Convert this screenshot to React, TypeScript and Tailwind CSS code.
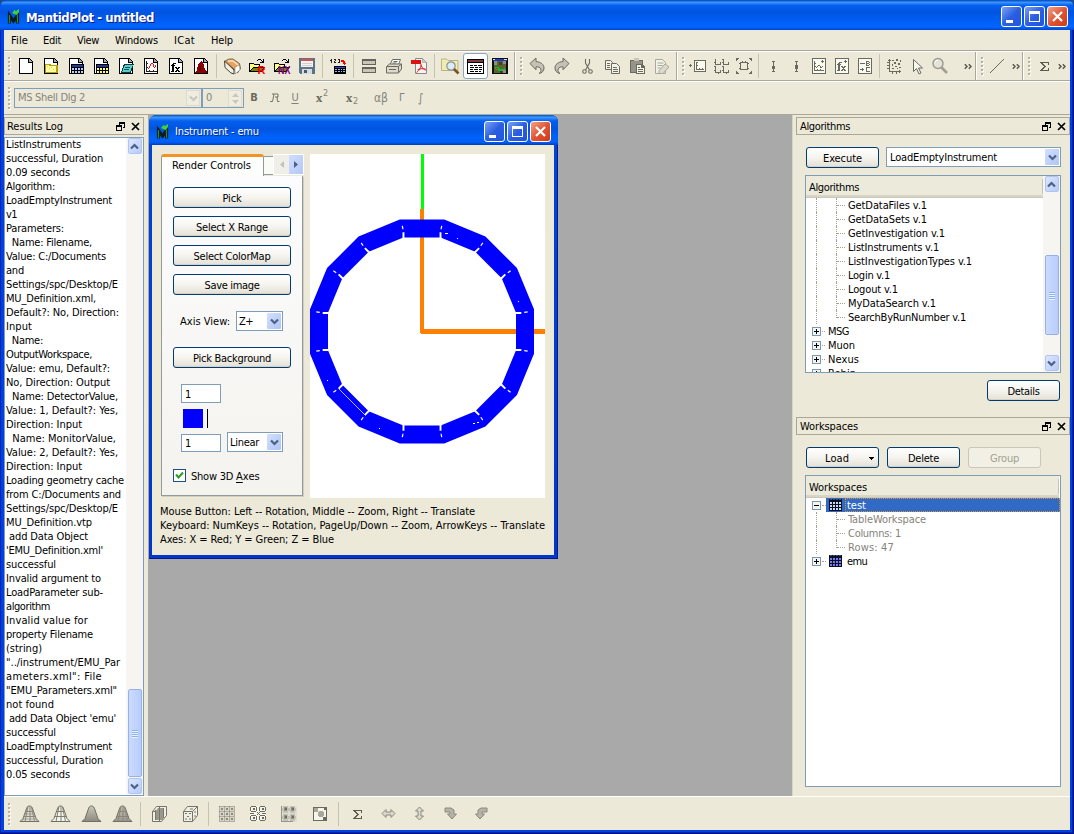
import React, { useLayoutEffect, useRef, useState } from "react";

/* Text whose tracking is computed so that it spans a given width. */
function Fit({ t, w, c = "" }: { t: string; w: number; c?: string }) {
  const ref = useRef<HTMLSpanElement>(null);
  const [ls, setLs] = useState(0);
  useLayoutEffect(() => {
    const el = ref.current;
    if (!el) return;
    el.style.letterSpacing = "0px";
    const natural = el.getBoundingClientRect().width;
    setLs((w - natural) / t.length);
    el.style.letterSpacing = `${(w - natural) / t.length}px`;
  }, [t, w]);
  return (
    <span ref={ref} className={`inline-block whitespace-pre ${c}`} style={{ letterSpacing: `${ls}px` }}>
      {t}
    </span>
  );
}

const G = "#6b6a5e";

function Ico({ children }: { children: React.ReactNode }) {
  return (
    <svg width="21" height="20" viewBox="0 0 21 20" shapeRendering="crispEdges" className="shrink-0">
      {children}
    </svg>
  );
}
const Cell = ({ children, c = "w-[25px]" }: { children?: React.ReactNode; c?: string }) => (
  <div className={`flex h-full shrink-0 items-center justify-center ${c}`}>{children}</div>
);
const Sep = () => (
  <div className="flex h-full w-[6px] shrink-0 items-center pl-[2px]">
    <div className="h-[24px] w-px bg-[#c5c2b2]" />
  </div>
);
const Grip = ({ n = 5 }: { n?: number }) => (
  <div className="flex h-full w-[10px] shrink-0 flex-col items-center justify-center gap-[2px]">
    {Array.from({ length: n }, (_, i) => (
      <div key={i} className="h-[2px] w-[2px] bg-[#b5b2a2] shadow-[1px_1px_0_#fff]" />
    ))}
  </div>
);
const Break = () => <div className="h-[28px] w-[2px] shrink-0 border-r border-white bg-[#aca899]" />;
const Chev = () => (
  <svg width="9" height="7" viewBox="0 0 9 7" fill="none" stroke="#55544a" strokeWidth="1.4">
    <path d="M.8 1.300 3 3.500.8 5.700M4.800 1.300 7 3.500 4.800 5.700" />
  </svg>
);

const Page = () => (
  <>
    <path d="M3 2h10l4 4v12H3z" fill="#000" />
    <path d="M4 3h8v4h4v10H4z" fill="#fff" />
    <path d="M13 3v3h3z" fill="#aaa" />
  </>
);
const Grid = ({ x, y, f }: { x: number; y: number; f: string }) => (
  <>
    <path d={`M${x} ${y}h13v10h-13z`} fill="#000" />
    <path d={`M${x + 1} ${y + 1}h11v2h-11z`} fill="#223a9c" />
    {[0, 1, 2, 3].map((i) =>
      [0, 1].map((j) => <rect key={`${i}${j}`} x={x + 1 + i * 3} y={y + 4 + j * 3} width="2" height="2" fill={f} />)
    )}
  </>
);
/* The letters f and x, nine pixels square, as rows of pixels. */
const FX = ["..XXX....", ".XX......", "XXXX.....", ".XX......", ".XX.XX.XX", ".XX..XXX.", ".XX...X..", ".XX..XXX.", "XXX.XX.XX"];
const Fx = ({ x, y, f }: { x: number; y: number; f: string }) => (
  <g fill={f}>
    {FX.flatMap((row, j) =>
      row.split("").map((p, i) => (p === "X" ? <rect key={`${i}-${j}`} x={x + i} y={y + j} width="1" height="1" /> : null))
    )}
  </g>
);

const FileIcons = () => (
  <>
    <Cell><Ico><Page /></Ico></Cell>
    <Cell>
      <Ico>
        <Page />
        <path d="M4 8h5l1 1h7v8H4z" fill="#b9a000" />
        <path d="M5 9h3v1h7v6H5z" fill="#ffffa0" />
        <path d="M6 10h1v1H6zM8 12h1v1H8zM10 11h1v1h-1zM12 13h1v1h-1z" fill="#e8d840" />
      </Ico>
    </Cell>
    <Cell><Ico><Page /><Grid x={5} y={8} f="#b8d0ff" /></Ico></Cell>
    <Cell><Ico><Page /><Grid x={5} y={8} f="#ffff70" /></Ico></Cell>
    <Cell>
      <Ico>
        <Page />
        <path d="M8 8h10l-3 9H5z" fill="#063c3c" />
        <path d="M9 9h8l-3 7H6z" fill="#5ccccc" />
        <path d="M9 11h5v1H9zM8 13h5v1H8z" fill="#075e5e" />
      </Ico>
    </Cell>
    <Cell>
      <Ico>
        <Page />
        <path d="M5 5h1v10h10v1H5zM6 7h1v1H6zM6 11h1v1H6zM8 14h1v1H8zM12 14h1v1h-1z" fill="#222" />
        <path d="M7 12h1v1H7zM8 10h1v2H8zM9 8h1v2H9zM10 7h2v1h-2zM12 8h1v3h-1zM13 11h1v1h-1zM14 9h1v2h-1z" fill="#e11" />
      </Ico>
    </Cell>
    <Cell><Ico><Page /><Fx x={5} y={7} f="#000" /></Ico></Cell>
    <Cell>
      <Ico>
        <Page />
        <path d="M4 17v-1l2-2 1-5 1-2h1l1-2 2 2 1 2 1 5 2 2v1z" fill="#8e0000" />
        <path d="M8 10h2v5H8z" fill="#5b0000" />
      </Ico>
    </Cell>
  </>
);

const Folder = ({ l, f }: { l: string; f: string }) => (
  <Ico>
    <path d="M2 7h4l1 1h6v3h5l-3 5H2z" fill="#000" />
    <path d="M3 8h3l1 1h5v2H6l-3 4z" fill="#ffff80" />
    <path d="M6 12h10l-2 3H4z" fill="#808000" />
    <path d="M10 4h1v1h-1zM11 3h3v1h-3zM14 4h1v1h-1zM16 3h1v4h-4V6h2V5h1z" fill="#000" />
    <text
      x={l === "R" ? 10.500 : 6}
      y="18"
      fontSize="11"
      fontWeight="700"
      fontFamily="Liberation Sans, sans-serif"
      fill={f}
      textLength={l === "R" ? 8 : 12.500}
      lengthAdjust="spacingAndGlyphs"
    >
      {l}
    </text>
  </Ico>
);

const Magnifier = ({ s = "#9b9a90", h = "#a09e92" }: { s?: string; h?: string }) => (
  <svg width="21" height="20" viewBox="0 0 21 20">
    <path d="M11.500 11.500l5.500 5.500" stroke={h} strokeWidth="2.600" />
    <circle cx="8" cy="7.500" r="5" fill="#e4e3d8" stroke={s} strokeWidth="1.400" />
    <path d="M5 7a3 3 0 0 1 3-3" stroke="#fff" fill="none" />
  </svg>
);

const Swirl = ({ flip = false }: { flip?: boolean }) => (
  <svg width="21" height="20" viewBox="0 0 21 20">
    <g transform={flip ? "translate(21 0) scale(-1 1)" : undefined}>
      <path d="M3 7.500l6-5.500v3.500c5 .5 8 3 8 6.500 0 3-2 5-5 5.500 2-1.500 2.500-3 1.700-4.700-.7-1.500-2.400-2-4.700-2v3z" fill="#c4c2b4" stroke={G} strokeWidth="1" />
    </g>
  </svg>
);

const Frame = ({ children }: { children: React.ReactNode }) => (
  <Ico>
    <path d="M3 2h14v16H3zM4 3v14h12V3z" fillRule="evenodd" fill={G} />
    <path d="M4 3h12v14H4z" fill="#fbfaf0" />
    {children}
  </Ico>
);
const Pin = ({ up }: { up?: boolean }) => (
  <Ico>
    <path d={up ? "M9 5h3v1h-1v3h1v4h-1v2h1v1H9v-1h1v-2H9V9h1V6H9z" : "M9 5h3v1h-1v4h1v3h-1v2h1v1H9v-1h1v-2H9v-3h1V6H9z"} fill={G} />
  </Ico>
);
const Sigma = () => (
  <svg width="21" height="20" viewBox="0 0 21 20" shapeRendering="crispEdges">
    <path d="M6 6h9v3h-1V7H9v1h1v1h1v1h1v1h-1v1h-1v1H9v1h5v-2h1v3H6v-1h1v-1h1v-1h1v-1h1v-1h-1V9H8V8H7V7H6z" fill="#5d5c51" />
  </svg>
);

function TopToolbar() {
  return (
    <div className="flex h-[30px] shrink-0 items-center border-t border-b border-t-white border-b-[#aca899]">
      <Grip />
      <FileIcons />
      <Sep />
      <Cell>
        <svg width="21" height="20" viewBox="0 0 21 20">
          <path d="M2.500 5l9.500 9 0 4-3-1-6-5.500z" fill="#f4efe3" stroke="#443" strokeWidth="1" />
          <path d="M3 5l4-2 4 0 6.500 4.500 1 5-3 4.500-3.500-4z" fill="#eda25c" stroke="#554" strokeWidth=".8" />
          <path d="M13 11l4.500-2 .5 5-5 4z" fill="#fff" stroke="#665" strokeWidth=".5" />
          <path d="M6 5l5 0 5 4" stroke="#fbe2c3" strokeWidth="1.500" fill="none" />
        </svg>
      </Cell>
      <Cell><Folder l="R" f="#f00" /></Cell>
      <Cell><Folder l="NX" f="#800080" /></Cell>
      <Cell>
        <Ico>
          <path d="M2 2h16v16H3l-1-1z" fill="#5a7386" />
          <path d="M4 3h12v8H4z" fill="#f3f3f3" />
          <path d="M4 3h12v2H4z" fill="#d9524a" />
          <path d="M5 7h10v1H5zM5 9h10v1H5z" fill="#cfcfcf" />
          <path d="M5 13h10v5H5z" fill="#d6dbe0" />
          <path d="M7 14h3v3H7z" fill="#48586a" />
        </Ico>
      </Cell>
      <Sep />
      <Cell>
        <Ico>
          <path d="M3 3h1v4H3zM2 4h1v1H2zM6 3h2v2H7v1h1v1H6V5h1V4H6zM10 3h2v4h-2V6h1V5h-1V5h1V4h-1z" fill="#222" />
          <path d="M13 4h3v1h1v2h1l-2 2-2-2h1V6h-2z" fill="#f00" />
          <path d="M6 10h12v8H6z" fill="#000" />
          <path d="M7 11h10v1H7z" fill="#3048d0" />
          <path d="M7 13h2v1H7zM10 13h2v1h-2zM13 13h1v1h-1zM15 13h2v1h-2zM7 15h2v1H7zM10 15h2v1h-2zM13 15h1v1h-1zM15 15h2v1h-2z" fill="#9ab8ff" />
        </Ico>
      </Cell>
      <Sep />
      <Cell>
        <Ico>
          <path d="M3 3h14v6H3zM3 11h14v6H3z" fill="#66645a" />
          <path d="M4 5h12v3H4zM4 13h12v3H4z" fill="#c9c6b7" />
        </Ico>
      </Cell>
      <Cell>
        <svg width="21" height="20" viewBox="0 0 21 20" stroke={G}>
          <path d="M6 8.500l2.500-5h8l-2 5" fill="#fff" />
          <path d="M2.500 10.500l3-2.500h12v5l-3 4h-12z" fill="#dddacd" />
          <path d="M3 10.500h11.500v6M14.500 10.500l3-2.500M5 13.500h7M9.500 5.500h4M8.500 7h4" fill="none" strokeWidth="1" />
        </svg>
      </Cell>
      <Cell>
        <svg width="21" height="20" viewBox="0 0 21 20">
          <path d="M6.500 2.500h7l4 4v11h-11z" fill="#f4f4f4" stroke="#888" />
          <path d="M13.500 2.500v4h4z" fill="#ccc" stroke="#999" strokeWidth=".6" />
          <path d="M2 4h10v4H2z" fill="#dc1010" />
          <path d="M12 8c0 3-1 6-4.500 8.500M12 9c1 3 3 5 5 5M8.500 13.800c2-1 5-1.500 8-.8" fill="none" stroke="#e02020" strokeWidth="1" />
        </svg>
      </Cell>
      <Sep />
      <Cell>
        <svg width="21" height="20" viewBox="0 0 21 20">
          <path d="M1.500 4.500V3h5l1.500 1.500h10v10h-16.500z" fill="#f1edb0" stroke="#b8b280" />
          <circle cx="11" cy="10" r="4.200" fill="#dcecf6" stroke="#8894a0" strokeWidth="1.200" />
          <path d="M14 13l4.500 4.500" stroke="#7b5329" strokeWidth="2.600" />
        </svg>
      </Cell>
      <Cell>
        <div className="flex h-[26px] w-[25px] shrink-0 items-center justify-center rounded-[3px] border border-[#8aa4bf] bg-white">
          <Ico>
            <path d="M2 3h17v15H2z" fill="#000" />
            <path d="M3 4h15v2H3z" fill="#7d3b3b" />
            <path d="M3 7h15v10H3z" fill="#fff" />
            <path d="M5 9h3v1H5zM9 9h3v1H9zM13 9h4v1h-4zM5 11h4v1H5zM10 11h3v1h-3zM14 11h3v1h-3zM5 13h3v1H5zM9 13h4v1H9zM14 13h3v1h-3zM5 15h4v1H5zM10 15h3v1h-3zM14 15h2v1h-2z" fill="#000" />
          </Ico>
        </div>
      </Cell>
      <Cell>
        <Ico>
          <path d="M2 2h16v16H2z" fill="#111" />
          <path d="M3 3h14v2H3z" fill="#2538c0" />
          <path d="M3 3h2v1H3zM14 3h3v1h-3z" fill="#dde" />
          <path d="M4 5h12v12H4z" fill="#5d6230" />
          <path d="M4 5h3v4H4zM13 5h3v3h-3zM12 14h4v3h-4z" fill="#8d9180" />
          <path d="M5 11h4v1h1v1h4v-1h1v2h-3v1H8v-1H6v-1H5z" fill="#13b82c" />
          <path d="M9 6h3v3H9zM10 15h3v2h-3z" fill="#3c4418" />
          <path d="M6 12h2v1H6z" fill="#e02010" />
        </Ico>
      </Cell>
      <Cell c="w-px" />
      <Break />
      <Cell c="w-[9px]"><Grip /></Cell>
      <Cell><Swirl /></Cell>
      <Cell c="w-[25px] -ml-px mr-px"><Swirl flip /></Cell>
      <Cell>
        <svg width="21" height="20" viewBox="0 0 21 20" fill="none" stroke={G} strokeWidth="1.100">
          <path d="M8.500 3v4l4 7M12.500 3v4l-4 7" />
          <circle cx="7.500" cy="15.500" r="1.800" />
          <circle cx="13.500" cy="15.500" r="1.800" />
        </svg>
      </Cell>
      <Cell>
        <svg width="21" height="20" viewBox="0 0 21 20" stroke={G} fill="#f4f3e8">
          <path d="M3.500 4.500h5l2 2v7h-7z" />
          <path d="M9.500 7.500h5l3 3v7h-8z" />
          <path d="M5 7.500h3M5 9.500h3M5 11.500h3M11 11.500h4M11 13.500h5M11 15.500h5" />
        </svg>
      </Cell>
      <Cell>
        <Ico>
          <path d="M3 4h13v13H3z" fill={G} />
          <path d="M4 5h11v11H4z" fill="#96948a" />
          <path d="M7 2h5v3H7z" fill="#c9c6b8" />
          <path d="M9 8h6l3 3v7H9z" fill={G} />
          <path d="M10 9h4v3h3v5h-7z" fill="#f4f3e8" />
          <path d="M11 11h2v1h-2zM11 13h5v1h-5zM11 15h5v1h-5z" fill={G} />
        </Ico>
      </Cell>
      <Cell>
        <svg width="21" height="20" viewBox="0 0 21 20" stroke="#aaa89b">
          <path d="M3.500 3.500h7l3 3v11h-10z" fill="#f2f1e6" />
          <path d="M5.500 7h6M5.500 9.500h5M5.500 12h3" />
          <path d="M7 14.500l6-6.500 4 3-6 6.500-4 0z" fill="#dbd9cb" />
        </svg>
      </Cell>
      <Cell c="w-px" />
      <Break />
      <Cell c="w-[9px]"><Grip /></Cell>
      <Cell c="w-[23px]">
        <Ico>
          <path d="M1 9h3v1H1zM2 8h1v3H2z" fill={G} />
          <path d="M6 4h12v12H6z" fill={G} />
          <path d="M7 5h10v10H7z" fill="#fbfaf0" />
          <path d="M8 6h2v1H9v2h1v1H9v3h2v-1h1v1h2v-1h1v1h1v1H8z" fill={G} />
        </Ico>
      </Cell>
      <Cell c="w-[23px]">
        <Ico>
          <path d="M3 3h2v1H4zM4 4h1v4h4V6h1v3H4zM3 6h1v1H3zM11 3h2v1h-2zM12 4h1v4h4V6h1v3h-6zM11 6h1v1h-1zM3 10h2v1H3zM4 11h1v5h4v-2h1v3H8v1H7v-1H4zM3 14h1v1H3zM11 10h2v1h-2zM12 11h1v5h4v-2h1v3h-2v1h-1v-1h-3zM11 14h1v1h-1z" fill={G} />
        </Ico>
      </Cell>
      <Cell c="w-[23px]">
        <Ico>
          <path d="M2 2h3v1H4v1H3v1H2zM15 2h3v3h-1V4h-1V3h-1zM2 15h1v1h1v1h1v1H2zM17 15h1v3h-3v-1h1v-1h1z" fill={G} />
          <path d="M6 6h8v8H6zM7 7v6h6V7z" fillRule="evenodd" fill={G} />
          <path d="M5 7h1v1H5zM5 12h1v1H5zM14 7h1v1h-1zM14 12h1v1h-1zM8 5h1v1H8zM11 5h1v1h-1z" fill={G} />
        </Ico>
      </Cell>
      <Sep />
      <Cell c="w-[23px]"><Pin /></Cell>
      <Cell c="w-[23px]"><Pin up /></Cell>
      <Cell c="w-[23px]">
        <Frame>
          <path d="M5 5h1v9h9v1H5zM6 7h1v1H6zM6 10h1v1H6zM8 13h1v1H8zM11 13h1v1h-1z" fill={G} />
          <path d="M7 11h1v1H7zM8 10h1v1H8zM9 9h1v1H9zM10 9h1v1h-1zM11 10h1v2h-1zM12 11h1v1h-1zM13 10h1v1h-1zM12 5h3v1h-3zM13 4h1v3h-1z" fill={G} />
        </Frame>
      </Cell>
      <Cell c="w-[23px]"><Frame><Fx x={5} y={6} f={G} /><path d="M12 5h3v1h-3zM13 4h1v3h-1z" fill={G} /></Frame></Cell>
      <Cell c="w-[23px]">
        <Frame>
          <path d="M5 7h5v1H5zM5 13h4v1H5zM7 12h1v3H7zM11 5h3v1h-2v1h2v1h-2v1h2v1h-3zM14 6h1v1h-1zM14 8h1v1h-1zM11 11h4v1h-3v3h3v1h-4z" fill={G} />
        </Frame>
      </Cell>
      <Sep />
      <Cell c="w-[23px]">
        <Ico>
          <path d="M5 3h1v12h11v1H5zM4 4h3v1H4zM15 14h1v3h-1zM3 6h2v1H3zM3 9h2v1H3zM3 12h2v1H3zM8 16h1v2H8zM12 16h1v2h-1z" fill={G} />
          <path d="M8 4h2v1H8zM12 3h2v2h-2zM16 4h1v2h-1zM10 6h2v2h-2zM14 7h2v2h-2zM8 8h1v2H8zM11 10h2v1h-2zM8 12h2v1H8zM15 11h2v1h-2zM13 12h1v1h-1z" fill={G} />
        </Ico>
      </Cell>
      <Cell c="w-[23px]">
        <svg width="21" height="20" viewBox="0 0 21 20">
          <path d="M6.500 3.500v12l3-3 2.500 5.500 2-1-2.500-5h4z" fill="#f8f7ee" stroke={G} />
        </svg>
      </Cell>
      <Cell c="w-[23px]"><Magnifier /></Cell>
      <Cell c="w-[23px] pl-[10px]"><Chev /></Cell>
      <Break />
      <Cell c="w-[9px]"><Grip /></Cell>
      <Cell c="w-[22px]">
        <svg width="16" height="16" viewBox="0 0 16 16"><path d="M1 15L15 1" stroke={G} /></svg>
      </Cell>
      <Cell c="w-[14px] pl-[2px]"><Chev /></Cell>
      <Break />
      <Cell c="w-[9px]"><Grip /></Cell>
      <Cell c="w-[23px]"><Sigma /></Cell>
      <Cell c="w-[12px]"><Chev /></Cell>
    </div>
  );
}

const Arrow = ({ d = "down", f = "#4d6185" }: { d?: string; f?: string }) => (
  <svg width="9" height="7" viewBox="0 0 9 7">
    <path d={d === "down" ? "M1 1.500l3.500 3.500L8 1.500" : "M1 5.500l3.500-3.500L8 5.500"} fill="none" stroke={f} strokeWidth="2.200" />
  </svg>
);
const ScrollBtn = ({ d }: { d: string }) => (
  <div className="flex h-[16px] w-[14px] shrink-0 items-center justify-center rounded-[2px] border border-[#b0c4f4] bg-gradient-to-br from-[#dce6ff] to-[#b8cbf8]">
    <Arrow d={d} />
  </div>
);
const Thumb = ({ c }: { c: string }) => (
  <div className={`flex w-[14px] shrink-0 flex-col items-center justify-center gap-px rounded-[2px] border border-[#98b0e8] bg-gradient-to-r from-[#cbdbff] to-[#b9cdfb] ${c}`}>
    {[0, 1, 2, 3].map((i) => (
      <div key={i} className="h-px w-[6px] bg-[#8cb0f8] shadow-[0_1px_0_#eef4ff]" />
    ))}
  </div>
);
const Combo = ({ t, w, c, bc = "h-[16px]" }: { t: string; w: number; c: string; bc?: string }) => (
  <div className={`flex shrink-0 items-center justify-between border border-[#7f9db9] bg-white pr-px ${c}`}>
    <Fit t={t} w={w} c="pt-[1px]" />
    <div className={`flex w-[14px] items-center justify-center rounded-[1px] bg-gradient-to-br from-[#d3e0ff] to-[#afc5f5] ${bc}`}>
      <Arrow />
    </div>
  </div>
);
const Btn = ({ children, c = "" }: { children: React.ReactNode; c?: string }) => (
  <div className={`flex h-[21px] shrink-0 items-center justify-center rounded-[3px] border border-[#003c74] bg-gradient-to-b from-white via-[#f5f4ef] to-[#e3e0d6] pt-[3px] shadow-[inset_0_-1px_0_#d6d0c5] ${c}`}>
    {children}
  </div>
);

function WinBtns() {
  const base = "flex h-[21px] w-[21px] items-center justify-center rounded-[3px] border border-white ";
  const blue = base + "bg-gradient-to-br from-[#7ba0f4] via-[#2c5ee0] to-[#1f55df]";
  return (
    <div className="flex gap-[2px]">
      <div className={blue}>
        <svg width="19" height="19"><path d="M4 13h7v3H4z" fill="#fff" /></svg>
      </div>
      <div className={blue}>
        <svg width="19" height="19" shapeRendering="crispEdges"><path d="M4 4h11v11H4zM5 7v7h9V7z" fillRule="evenodd" fill="#fff" /></svg>
      </div>
      <div className={base + "bg-gradient-to-br from-[#f0a088] via-[#e05535] to-[#cc3a12]"}>
        <svg width="19" height="19"><path d="M5 5l9 9M14 5l-9 9" stroke="#fff" strokeWidth="2.200" /></svg>
      </div>
    </div>
  );
}
const Logo = () => (
  <svg width="16" height="17" viewBox="0 0 16 17">
    <path d="M2.500 15.500V7.500L6.500 13l4-5.500v8" fill="none" stroke="#0a1c20" strokeWidth="3.200" />
    <path d="M2.500 15V7M10.500 15V7" fill="none" stroke="#2c8a34" strokeWidth="1.200" />
    <path d="M5 5l2.500-3L9 3l3-2v3l-2 3-3-1z" fill="#3fd03a" />
  </svg>
);

const Dock = ({ t, w, c }: { t: string; w: number; c: string }) => (
  <div className={`flex h-[18px] shrink-0 items-center border border-[#aca899] ${c}`}>
    <Fit t={t} w={w} c="pt-[1px]" />
    <div className="ml-auto flex items-center gap-[6px]">
      <svg width="9" height="9" viewBox="0 0 9 9" shapeRendering="crispEdges">
        <path d="M3 0h6v6H7V5h1V2H4v1H3zM0 3h6v6H0zM1 5v3h4V5z" fillRule="evenodd" fill="#000" />
      </svg>
      <svg width="9" height="9" viewBox="0 0 9 9"><path d="M1 1l7 7M8 1L1 8" stroke="#000" strokeWidth="1.700" /></svg>
    </div>
  </div>
);

const LOG: [string, number][] = [
  ["ListInstruments", 75], ["successful, Duration", 97], ["0.09 seconds", 64], ["Algorithm:", 49],
  ["LoadEmptyInstrument", 106], ["v1", 11], ["Parameters:", 58], ["  Name: Filename,", 86],
  ["Value: C:/Documents", 100], ["and", 18], ["Settings/spc/Desktop/E", 112], ["MU_Definition.xml,", 90],
  ["Default?: No, Direction:", 113], ["Input", 26], ["  Name:", 37], ["OutputWorkspace,", 86],
  ["Value: emu, Default?:", 104], ["No, Direction: Output", 104], ["  Name: DetectorValue,", 112],
  ["Value: 1, Default?: Yes,", 112], ["Direction: Input", 76], ["  Name: MonitorValue,", 110],
  ["Value: 2, Default?: Yes,", 112], ["Direction: Input", 76], ["Loading geometry cache", 118],
  ["from C:/Documents and", 115], ["Settings/spc/Desktop/E", 112], ["MU_Definition.vtp", 86],
  [" add Data Object", 82], ["'EMU_Definition.xml'", 97], ["successful", 50], ["Invalid argument to", 95],
  ["LoadParameter sub-", 97], ["algorithm", 44], ["Invalid value for", 82], ["property Filename", 87],
  ["(string)", 36], ["\"../instrument/EMU_Par", 114], ["ameters.xml\": File", 96], ["\"EMU_Parameters.xml\"", 111],
  ["not found", 48], [" add Data Object 'emu'", 110], ["successful", 50], ["LoadEmptyInstrument", 106],
  ["successful, Duration", 97], ["0.05 seconds", 64],
];

function ResultsLog() {
  return (
    <div className="flex w-[144px] shrink-0 flex-col pt-[2px]">
      <Dock t="Results Log" w={56} c="w-[140px] pl-[2px] pr-[3px]" />
      <div className="mt-[2px] flex h-[659px] w-[140px] border border-[#7f9db9] bg-white">
        <div className="h-full w-[121px] shrink-0 overflow-hidden pl-px">
          {LOG.map(([t, w], i) => (
            <div key={i} className="h-[14px] leading-[14px]"><Fit t={t} w={w} /></div>
          ))}
        </div>
        <div className="flex h-full w-[17px] flex-col items-center bg-[#f6f5f1]">
          <ScrollBtn d="up" />
          <div className="h-[535px] shrink-0" />
          <Thumb c="h-[88px]" />
          <div className="mt-auto pb-px"><ScrollBtn d="down" /></div>
        </div>
      </div>
    </div>
  );
}

const poly = (a: number) =>
  Array.from({ length: 16 }, (_, i) => {
    const t = ((i + 0.5) * Math.PI) / 8;
    const r = a / Math.cos(Math.PI / 16);
    return `${(112 + r * Math.cos(t)).toFixed(2)} ${(177.5 + r * Math.sin(t)).toFixed(2)}`;
  }).join("L");

function Viewport() {
  return (
    <svg width="235" height="344" viewBox="0 0 235 344" className="block shrink-0 bg-white">
      <g shapeRendering="crispEdges">
        <path d="M111 0h3v55h-3z" fill="#00ff00" />
        <path d="M110 55h4v120h121v5H111l-1-1z" fill="#ff8000" />
      </g>
      <path d={`M${poly(112)}ZM${poly(94)}Z`} fillRule="evenodd" fill="#0000ff" />
      <g stroke="#fff">
        {Array.from({ length: 16 }, (_, i) => {
          const t = ((i + 0.5) * Math.PI) / 8;
          const n = Math.round(t / (Math.PI / 4)) * (Math.PI / 4);
          /* each seam leans towards the nearest flat bank */
          const u = t + (n > t ? 0.012 : -0.012);
          return (
            <g key={i}>
              <path d={`M${112 + 95 * Math.cos(t)} ${177.5 + 95 * Math.sin(t)}L${112 + 101 * Math.cos(u)} ${177.5 + 101 * Math.sin(u)}`} strokeWidth="1.900" />
              <path d={`M${112 + 104 * Math.cos(u)} ${177.5 + 104 * Math.sin(u)}L${112 + 107.5 * Math.cos(u)} ${177.5 + 107.5 * Math.sin(u)}`} strokeWidth="1.200" />
            </g>
          );
        })}
        <path d="M28.500 234.500l27 27" stroke="#b9b9ff" strokeWidth="1" />
      </g>
      <path d="M147 84h1v1h-1zM208 147h1v1h-1zM17 226h1v1h-1zM69 274h1v1h-1zM135 79h3v1h-3zM163 269h2v1h-2zM167 268h2v1h-2z" fill="#fff" />
    </svg>
  );
}

function InstrumentWindow() {
  return (
    <div className="ml-px flex h-[444px] w-[409px] flex-col overflow-hidden rounded-t-[7px] bg-gradient-to-b from-[#0046d5] to-[#0036cc] shadow-[inset_-1px_-1px_0_#001a90]">
      <div className="flex h-[30px] shrink-0 items-center bg-[linear-gradient(180deg,#0058c8_0%,#3c94ff_8%,#0460ee_20%,#0054e0_45%,#0062fa_75%,#0060f8_90%,#003cc0_100%)] pl-[7px] pr-[7px] pt-[2px] text-white">
        <Logo />
        <Fit t="Instrument - emu" w={84} c="ml-[3px] pt-[2px] [text-shadow:1px_1px_#002a90]" />
        <div className="ml-auto"><WinBtns /></div>
      </div>
      <div className="ml-[3px] flex h-[410px] w-[402px] flex-col bg-[#ece9d8] pl-[9px] pt-[9px]">
        <div className="flex h-[344px]">
          <div className="flex w-[149px] shrink-0 flex-col">
            <div className="flex h-[22px] shrink-0">
              <div className="flex h-[22px] w-[103px] items-center rounded-t-[3px] border-x border-t-[3px] border-x-[#919b9c] border-t-[#f29425] bg-[#fdfdfc] pl-[10px] pb-[1px]">
                <Fit t="Render Controls" w={79} />
              </div>
              <div className="mt-[2px] h-[19px] w-[9px] border-t border-b border-[#919b9c] bg-[#fafaf7]" />
              <div className="flex h-[21px] w-[31px] border border-white">
                <div className="flex w-[15px] items-center justify-center bg-[#efeee8]">
                  <svg width="4" height="7"><path d="M4 0v7L0 3.500z" fill="#c4c2b8" /></svg>
                </div>
                <div className="flex w-[14px] items-center justify-center bg-gradient-to-br from-[#d0ddff] to-[#b2c8f8]">
                  <svg width="4" height="7"><path d="M0 0v7l4-3.500z" fill="#4d6185" /></svg>
                </div>
              </div>
            </div>
            <div className="flex h-[320px] w-[142px] flex-col border border-t-0 border-[#919b9c] bg-gradient-to-b from-[#fcfcfe] to-[#f4f3ee] pl-[11px] pt-[11px] shadow-[1px_1px_0_#d0cec0]">
              <div className="flex flex-col gap-[8px]">
                <Btn c="w-[118px]"><Fit t="Pick" w={19} /></Btn>
                <Btn c="w-[118px]"><Fit t="Select X Range" w={72} /></Btn>
                <Btn c="w-[118px]"><Fit t="Select ColorMap" w={77} /></Btn>
                <Btn c="w-[118px]"><Fit t="Save image" w={55} /></Btn>
              </div>
              <div className="mt-[16px] flex h-[20px] items-center pl-[7px]">
                <Fit t="Axis View:" w={50} c="pt-[2px]" />
                <Combo t="Z+" w={14} c="ml-[6px] h-[20px] w-[47px] pl-[2px]" />
              </div>
              <Btn c="mt-[16px] w-[118px]"><Fit t="Pick Background" w={78} /></Btn>
              <div className="ml-[8px] mt-[16px] flex h-[19px] w-[40px] shrink-0 items-center border border-[#7f9db9] bg-white pl-[3px] pt-[2px]">1</div>
              <div className="ml-[10px] mt-[6px] flex h-[19px] shrink-0 gap-[4px]">
                <div className="w-[20px] bg-[#0000ff]" />
                <div className="w-px bg-black" />
              </div>
              <div className="ml-[8px] mt-[4px] flex shrink-0 items-end gap-[6px]">
                <div className="flex h-[18px] w-[40px] items-center border border-[#7f9db9] bg-white pl-[3px] pt-[2px]">1</div>
                <Combo t="Linear" w={29} c="h-[20px] w-[56px] pl-[2px]" />
              </div>
              <div className="mt-[17px] flex h-[13px] items-center">
                <div className="flex h-[13px] w-[13px] items-center justify-center border border-[#1c5180] bg-white">
                  <svg width="9" height="9" viewBox="0 0 9 9"><path d="M1 3.500l2.500 3L8 1.500" fill="none" stroke="#21a121" strokeWidth="2" /></svg>
                </div>
                <div className="ml-[5px] flex whitespace-pre pt-[2px]">
                  <Fit t="Show 3D " w={45} />
                  <span className="underline decoration-1 underline-offset-2">A</span>
                  <Fit t="xes" w={17} />
                </div>
              </div>
            </div>
          </div>
          <Viewport />
        </div>
        <div className="mt-[7px] flex flex-col leading-[14px]">
          <div className="-ml-px"><Fit t="Mouse Button: Left -- Rotation, Middle -- Zoom, Right -- Translate" w={315} /></div>
          <div className="-ml-px"><Fit t="Keyboard: NumKeys -- Rotation, PageUp/Down -- Zoom, ArrowKeys -- Translate" w={385} /></div>
          <div className="-ml-px"><Fit t="Axes: X = Red; Y = Green; Z = Blue" w={174} /></div>
        </div>
      </div>
    </div>
  );
}

const HDots = ({ c }: { c: string }) => <div className={`h-0 shrink-0 border-t border-dotted border-[#a5a294] ${c}`} />;
const Expander = ({ plus = true }: { plus?: boolean }) => (
  <svg width="9" height="9" viewBox="0 0 9 9" shapeRendering="crispEdges" className="shrink-0">
    <path d="M0 0h9v9H0z" fill="#7898b5" />
    <path d="M1 1h7v7H1z" fill="#f6f4ee" />
    <path d={plus ? "M2 4h5v1H2zM4 2h1v5H4z" : "M2 4h5v1H2z"} fill="#000" />
  </svg>
);
const Leaf = ({ t, w, c = "", last = false, rail = false }: { t: string; w: number; c?: string; last?: boolean; rail?: boolean }) => (
  <div className={`flex h-[14px] shrink-0 pl-[10px] ${c}`}>
    <div className={`h-full w-[20px] ${rail ? "border-l border-dotted border-[#a5a294]" : ""}`} />
    <div className={`w-0 border-l border-dotted border-[#a5a294] ${last ? "h-[8px]" : "h-full"}`} />
    <div className="flex h-[14px] items-center">
      <HDots c="mr-[3px] w-[8px]" />
      <Fit t={t} w={w} c="pt-[2px]" />
    </div>
  </div>
);

const MiniGrid = ({ f }: { f: string }) => (
  <svg width="13" height="12" viewBox="0 0 13 12" shapeRendering="crispEdges" className="shrink-0">
    <rect width="13" height="12" fill="#0a1020" />
    {[0, 1, 2, 3].map((i) =>
      [0, 1, 2, 3].map((j) => (
        <rect key={`${i}${j}`} x={1 + i * 3} y={j * 3} width="2" height={j ? 2 : 1} fill={j ? f : "#345878"} />
      ))
    )}
  </svg>
);

const TreeHead = ({ t, w, c = "w-full" }: { t: string; w: number; c?: string }) => (
  <div className={`flex h-[22px] shrink-0 items-center border-b border-[#cbc7b8] bg-[#ebeadb] pl-[3px] shadow-[inset_0_-2px_0_#d9d5c6] ${c}`}>
    <Fit t={t} w={w} c="pt-[2px]" />
    <div className="ml-auto h-[15px] w-px bg-[#c7c5b2] shadow-[1px_0_0_#fff]" />
  </div>
);

const ALGS: [string, number][] = [
  ["GetDataFiles v.1", 79], ["GetDataSets v.1", 79], ["GetInvestigation v.1", 97], ["ListInstruments v.1", 91],
  ["ListInvestigationTypes v.1", 124], ["Login v.1", 42], ["Logout v.1", 50], ["MyDataSearch v.1", 88],
  ["SearchByRunNumber v.1", 118],
];
const GROUPS: [string, number][] = [["MSG", 21], ["Muon", 27], ["Nexus", 31], ["Rebin", 28]];

function RightDocks() {
  return (
    <div className="flex w-[278px] shrink-0 flex-col border-l border-[#d8d5c6] pl-[3px] pt-[2px]">
      <Dock t="Algorithms" w={50} c="w-[274px] pl-[3px] pr-[3px]" />
      <div className="mt-[12px] flex shrink-0 gap-[7px] pl-[10px]">
        <Btn c="w-[73px]"><Fit t="Execute" w={39} /></Btn>
        <Combo t="LoadEmptyInstrument" w={107} c="h-[20px] w-[175px] pl-[3px]" />
      </div>
      <div className="ml-[9px] mt-[7px] flex h-[198px] w-[256px] shrink-0 border border-[#7f9db9] bg-white">
        <div className="flex h-full w-[237px] shrink-0 flex-col overflow-hidden">
          <TreeHead t="Algorithms" w={50} />
          {ALGS.map(([t, w], i) => <Leaf key={t} t={t} w={w} rail last={i === ALGS.length - 1} />)}
          {GROUPS.map(([t, w]) => (
            <div key={t} className="flex h-[14px] shrink-0 items-center pl-[6px]">
              <Expander />
              <HDots c="ml-px mr-[3px] w-[3px]" />
              <Fit t={t} w={w} c="pt-[2px]" />
            </div>
          ))}
        </div>
        <div className="flex w-[17px] flex-col items-center bg-[#f6f5f1]">
          <ScrollBtn d="up" />
          <div className="h-[63px] shrink-0" />
          <Thumb c="h-[80px]" />
          <div className="mt-auto pb-px"><ScrollBtn d="down" /></div>
        </div>
      </div>
      <Btn c="ml-[191px] mt-[7px] w-[73px]"><Fit t="Details" w={32} /></Btn>
      <Dock t="Workspaces" w={58} c="mt-[16px] w-[274px] pl-[3px] pr-[3px]" />
      <div className="mt-[12px] flex shrink-0 gap-[8px] pl-[10px]">
        <Btn c="w-[73px] justify-end! pr-[4px]">
          <Fit t="Load" w={24} />
          <svg width="5" height="3" className="mb-[2px] ml-[20px]" shapeRendering="crispEdges"><path d="M0 0h5L2.500 3z" /></svg>
        </Btn>
        <Btn c="w-[73px]"><Fit t="Delete" w={31} /></Btn>
        <div className="flex h-[21px] w-[73px] items-center justify-center rounded-[3px] border border-[#c9c7ba] bg-[#f2f0e4] pt-[3px] text-[#a1a192]">
          <Fit t="Group" w={29} />
        </div>
      </div>
      <div className="ml-[9px] mt-[7px] flex h-[312px] w-[256px] shrink-0 flex-col border border-[#7f9db9] bg-white">
        <TreeHead t="Workspaces" w={58} c="w-[253px]" />
        <div className="flex h-[14px] shrink-0 items-center pl-[6px]">
          <Expander plus={false} />
          <HDots c="ml-px w-[4px]" />
          <div className="flex h-[14px] flex-1 items-center bg-[#316ac5] pl-[3px] text-white">
            <MiniGrid f="#c8dcf8" />
            <div className="ml-[3px] flex h-full flex-1 items-center border border-dotted border-[#d8963a] pl-px">
              <Fit t="test" w={19} c="pt-[2px]" />
            </div>
          </div>
        </div>
        <Leaf t="TableWorkspace" w={78} rail c="text-[#85837a]" />
        <Leaf t="Columns: 1" w={53} rail c="text-[#85837a]" />
        <Leaf t="Rows: 47" w={46} rail last c="text-[#85837a]" />
        <div className="flex h-[14px] shrink-0 items-center pl-[6px]">
          <Expander />
          <HDots c="ml-px w-[4px]" />
          <div className="flex items-center gap-[5px] pl-[3px]">
            <MiniGrid f="#7878f8" />
            <Fit t="emu" w={20} c="pt-[2px]" />
          </div>
        </div>
      </div>
    </div>
  );
}

const Hill = ({ k }: { k: number }) => {
  const s = k === 1 ? "#7d7c70" : "#88867a";
  return (
    <svg width="21" height="20" viewBox="0 0 21 20" fill="none" stroke={s}>
      <defs>
        <linearGradient id={`hill${k}`} x1="0" y1="0" x2="0" y2="1">
          <stop offset="0" stopColor="#c8c6b8" />
          <stop offset="1" stopColor={k === 3 ? "#98968a" : "#8c8a7e"} />
        </linearGradient>
      </defs>
      <path
        d="M1 17.500l3-3 3-8.500c1-3 1.500-4 3.500-4s2.500 1 3.500 4l3 8.500 3 3z"
        fill={k === 0 ? "#dedccf" : k === 1 ? "#f6f5ea" : `url(#hill${k})`}
        stroke="#6f6e62"
      />
      {k !== 2 && <path d="M9 2.500L6 17.500M11 2v15.500M12.500 3l3 14.500M6.500 7.500h8.500M4.500 12.500h12" />}
      {k === 0 && <path d="M8 5l-4.500 12M13.500 5l4.500 12M5.500 10h10M4 15h13" strokeWidth=".6" />}
    </svg>
  );
};

const Cube = ({ f }: { f: boolean }) => (
  <svg width="21" height="20" viewBox="0 0 21 20" stroke="#77756a" fill="#f0efe3">
    <path d="M3.500 7.500l4-5h10v9l-5 6h-9z" />
    {f && <path d="M6 8l3-4h5v12H6z" fill="#9a988b" stroke="none" />}
    {f ? (
      <path d="M6.500 6v10M10.500 3v14M14.500 4v10M3.500 7.500h3" fill="none" />
    ) : (
      <path d="M3.500 7.500h9v10M12.500 7.500l5-5M5 9.500h2M9 9.500h2M7 12.500h2M5 15h2M9 15h2M10 5h3M15 7v2M15 11v2" fill="none" />
    )}
  </svg>
);

const Pattern = ({ k }: { k: number }) => {
  const corners = [[0, 0], [1, 0], [0, 1], [1, 1]];
  return (
    <Ico>
      {k === 0 && (
        <>
          <path d="M2 2h16v16H2z" fill="#d8d6c8" />
          {[0, 1, 2, 3].map((i) => (
            <path key={i} d={`M${2 + i * 5} 2h1v16h-1zM2 ${2 + i * 5}h16v1H2z`} fill="#b0ae9f" />
          ))}
          {[0, 1, 2].map((i) =>
            [0, 1, 2].map((j) => <path key={`${i}${j}`} d={`M${4 + i * 5} ${4 + j * 5}h2v2h-2zM${2 + i * 5} ${2 + j * 5}h1v1h-1z`} fill="#8c8a7d" />)
          )}
        </>
      )}
      {k === 1 && (
        <>
          <path d="M2 2h16v15H2z" fill="#f6f5ea" />
          {corners.map(([i, j]) => (
            <path key={`${i}${j}`} d={`M${3 + i * 9} ${2 + j * 9}h5v1h1v4h-1v1h-5v-1h-1v-4h1zM${3 + i * 9} ${3 + j * 9}v4h5v-4zM${5 + i * 9} ${4 + j * 9}h2v2h-2z`} fillRule="evenodd" fill={G} />
          ))}
          <path d="M9 8h1v1H9zM11 8h1v1h-1zM10 9h1v1h-1zM9 10h1v1H9zM11 10h1v1h-1zM2 9h4v1H2zM14 9h4v1h-4z" fill={G} />
        </>
      )}
      {k === 2 && (
        <>
          <path d="M2 2h16v16H2z" fill="#e0deD0" />
          {corners.map(([i, j]) => (
            <g key={`${i}${j}`}>
              <path d={`M${4 + i * 7} ${2 + j * 8}h5v7h-5zM${3 + i * 7} ${4 + j * 8}h7v3h-7z`} fill="#c4c2b4" />
              <path d={`M${5 + i * 7} ${3 + j * 8}h3v4h-3z`} fill="#96948a" />
              <path d={`M${6 + i * 7} ${4 + j * 8}h2v2h-2z`} fill={G} />
            </g>
          ))}
          <path d="M2 2h1v16H2zM2 17h12v1H2z" fill="#96948a" />
        </>
      )}
    </Ico>
  );
};

function BottomToolbar() {
  const arrow = "#b6b4a6";
  return (
    <div className="flex h-[34px] shrink-0 items-center border-t border-white">
      <Grip n={6} />
      {[0, 1, 2, 3].map((k) => (
        <Cell key={k} c="w-[31px] pr-px"><Hill k={k} /></Cell>
      ))}
      <Sep />
      <Cell c="w-[31px]"><Cube f /></Cell>
      <Cell c="w-[31px]"><Cube f={false} /></Cell>
      <Sep />
      <Cell c="w-[31px]"><Pattern k={0} /></Cell>
      <Cell c="w-[31px]"><Pattern k={1} /></Cell>
      <Cell c="w-[31px]"><Pattern k={2} /></Cell>
      <Cell c="w-[31px]">
        <Ico>
          <path d="M3 3h14v14H3z" fill={G} />
          <path d="M4 4h12v12H4z" fill="#f6f5ea" />
          <path d="M4 4h4v4H4zM9 7h4v1h1v4h-1v1H9v-1H8V8h1z" fill="#a9a799" />
          <path d="M13 13h3v3h-3zM14 4h2v2h-2z" fill={G} />
        </Ico>
      </Cell>
      <Sep />
      <Cell c="w-[31px]"><Sigma /></Cell>
      <Cell c="w-[31px]">
        <svg width="15" height="11" viewBox="0 0 15 11"><path d="M1 5.500l4-4v2.500h5V1.500l4 4-4 4V7H5v2.500z" fill="#dad8ca" stroke="#8a887c" /></svg>
      </Cell>
      <Cell c="w-[31px]">
        <svg width="11" height="15" viewBox="0 0 11 15"><path d="M5.500 1l4 4H7v5h2.500l-4 4-4-4H4V5H1.500z" fill="#dad8ca" stroke="#8a887c" /></svg>
      </Cell>
      <Cell c="w-[31px]">
        <svg width="13" height="13" viewBox="0 0 13 13"><path d="M1 1h6l3 2v4h2.500L8 12 3.500 7H6V5H1z" fill={arrow} stroke="#8a887c" /></svg>
      </Cell>
      <Cell c="w-[31px]">
        <svg width="13" height="13" viewBox="0 0 13 13"><path d="M12 1H6L3 3v4H.500L5 12l4.500-5H7V5h5z" fill={arrow} stroke="#8a887c" /></svg>
      </Cell>
    </div>
  );
}

function FormatBar() {
  return (
    <div className="flex h-[34px] shrink-0 items-center border-t border-b border-t-white border-b-[#aca899] text-[#85837a]">
      <Grip n={6} />
      <div className="flex h-[20px] w-[188px] items-center justify-between border border-[#7f9db9] pl-[3px] pr-px">
        <Fit t="MS Shell Dlg 2" w={67} />
        <div className="flex h-[16px] w-[14px] items-center justify-center border border-[#dedccd] bg-[#efede0]"><Arrow f="#c9c7ba" /></div>
      </div>
      <div className="flex h-[20px] w-[42px] items-center justify-between border border-[#7f9db9] pl-[3px] pr-px">
        <span>0</span>
        <div className="flex h-[17px] w-[14px] flex-col items-center justify-center gap-[3px] border border-[#dedccd] bg-[#efede0]">
          <svg width="7" height="4"><path d="M0 4h7L3.500 0z" fill="#c9c7ba" /></svg>
          <svg width="7" height="4"><path d="M0 0h7L3.500 4z" fill="#c9c7ba" /></svg>
        </div>
      </div>
      <span className="w-[20px] text-center text-[11px] font-bold text-[#6b6a5e]">B</span>
      <svg width="22" height="12" viewBox="0 0 22 12" fill="none" stroke="#77756a">
        <path d="M6 9.500h2.500l1.500-7.500h-2M10 2h4v3h-3M14 5h-1l.5 4.500H15.500" />
      </svg>
      <span className="w-[18px] text-center text-[11px] underline underline-offset-2">U</span>
      <span className="ml-[12px] w-[7px] font-serif text-[12px] font-bold leading-none text-[#6b6a5e]">x</span>
      <span className="-mt-[9px] w-[23px] text-[9px] leading-none">2</span>
      <span className="w-[7px] font-serif text-[12px] font-bold leading-none text-[#6b6a5e]">x</span>
      <span className="mt-[6px] w-[21px] text-[9px] leading-none">2</span>
      <span className="w-[25px] text-[12px]">αβ</span>
      <span className="w-[19px] text-[11px]">Γ</span>
      <span className="text-[12px]">∫</span>
    </div>
  );
}

const MENU: [string, number, string][] = [
  ["File", 17, "w-[32px]"], ["Edit", 18, "w-[34px]"], ["View", 22, "w-[38px]"],
  ["Windows", 43, "w-[59px]"], ["ICat", 21, "w-[37px]"], ["Help", 22, "w-[30px]"],
];

export default function App() {
  return (
    <div className="h-[834px] w-[1074px] overflow-hidden bg-[#1c4e8c] font-['DejaVu_Sans_Condensed','DejaVu_Sans',sans-serif] text-[11px] leading-[14px] text-black [font-stretch:condensed]">
      <div className="flex h-full flex-col overflow-hidden rounded-t-[7px] bg-[#0040e0] shadow-[inset_-1px_-1px_0_#001080,inset_-2px_-2px_0_#0026b4,inset_1px_0_0_#0026b4]">
        <div className="flex h-[30px] shrink-0 items-center bg-[linear-gradient(180deg,#0048b8_0%,#3c94ff_8%,#0460ee_18%,#0054e0_40%,#0060f8_75%,#0066ff_90%,#0044cc_100%)] pl-[7px] pr-[6px] pt-[3px] text-white">
          <Logo />
          <Fit t="MantidPlot - untitled" w={128} c="ml-[3px] pt-[2px] text-[13px] font-bold [text-shadow:1px_1px_#0a1883]" />
          <div className="ml-auto"><WinBtns /></div>
        </div>
        <div className="ml-[4px] flex h-[800px] w-[1066px] flex-col bg-[#ece9d8]">
          <div className="flex h-[21px] shrink-0 items-center border-b border-[#aca899] pl-[6px] pt-[2px]">
            {MENU.map(([t, w, c]) => (
              <div key={t} className={`${c} pl-px`}><Fit t={t} w={w} /></div>
            ))}
          </div>
          <TopToolbar />
          <FormatBar />
          <div className="flex h-[681px] shrink-0">
            <ResultsLog />
            <div className="h-[681px] w-[644px] shrink-0 bg-[#a9a9a9]">
              <InstrumentWindow />
            </div>
            <RightDocks />
          </div>
          <BottomToolbar />
        </div>
      </div>
    </div>
  );
}
